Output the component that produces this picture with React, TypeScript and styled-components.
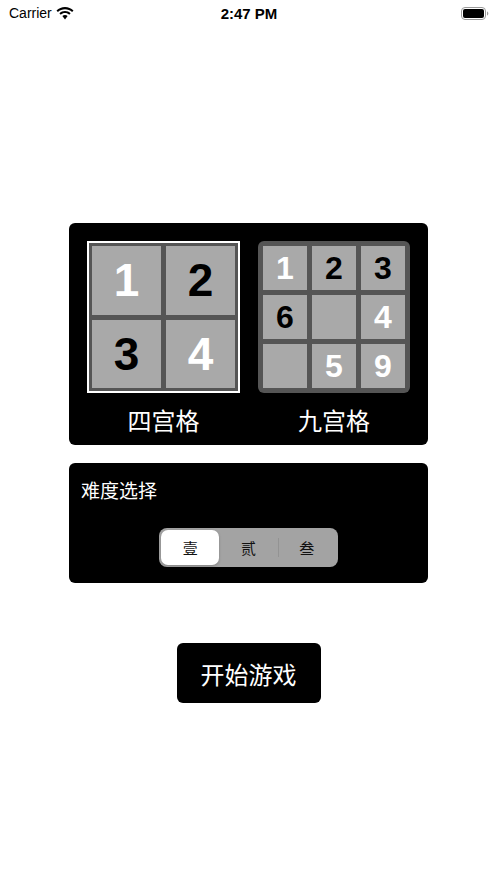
import React, { useState } from "react";
import styled, { createGlobalStyle } from "styled-components";

const Global = createGlobalStyle`
  html, body { margin: 0; padding: 0; background: #fff; }
  body { font-family: "Liberation Sans", "Noto Sans CJK SC", sans-serif; }
`;

const Page = styled.div`
  width: 497px;
  height: 883px;
  background: #fff;
  display: flex;
  flex-direction: column;
  align-items: center;
`;

const StatusBar = styled.div`
  width: 100%;
  height: 26px;
  box-sizing: border-box;
  padding: 0 8px 0 9px;
  display: grid;
  grid-template-columns: 1fr auto 1fr;
  align-items: center;
  font-family: "Liberation Sans", sans-serif;
  color: #000;
`;

const StatusLeft = styled.div`
  display: flex;
  align-items: center;
  gap: 4px;
  font-size: 14px;
`;

const StatusTime = styled.div`
  font-size: 15px;
  font-weight: bold;
`;

const StatusRight = styled.div`
  display: flex;
  justify-content: flex-end;
  align-items: center;
`;

const Card = styled.div<{ $mt: number }>`
  width: 359px;
  margin-top: ${(p) => p.$mt}px;
  background: #000;
  border-radius: 6px;
  box-sizing: border-box;
`;

const ModeCard = styled(Card)`
  padding: 18px 18px 9px 18px;
  display: grid;
  grid-template-columns: 153px 152px;
  column-gap: 18px;
`;

const ModeColumn = styled.div`
  display: flex;
  flex-direction: column;
  align-items: center;
`;

const FourGrid = styled.div`
  width: 153px;
  height: 152px;
  box-sizing: border-box;
  border: 2px solid #fff;
  background: #555;
  padding: 3px;
  display: grid;
  grid-template-columns: repeat(2, 69px);
  grid-template-rows: repeat(2, 68.5px);
  gap: 5px;
`;

const NineGrid = styled.div`
  width: 152px;
  height: 152px;
  box-sizing: border-box;
  background: #555;
  border-radius: 6px;
  padding: 5px;
  display: grid;
  grid-template-columns: repeat(3, 44px);
  grid-template-rows: repeat(3, 44px);
  gap: 5px;
`;

const Tile = styled.div<{ $light: boolean; $size: number }>`
  background: #a9a9a9;
  display: flex;
  align-items: center;
  justify-content: center;
  font-family: "Liberation Sans", sans-serif;
  font-weight: bold;
  font-size: ${(p) => p.$size}px;
  color: ${(p) => (p.$light ? "#fff" : "#000")};
  line-height: 1;
`;

const ModeLabel = styled.div`
  margin-top: 11px;
  color: #fff;
  font-family: "Noto Sans CJK SC", sans-serif;
  font-size: 24px;
  line-height: 32px;
`;

const DifficultyCard = styled(Card)`
  height: 120px;
  padding: 14px 12px 16px 12px;
  display: flex;
  flex-direction: column;
`;

const DiffTitle = styled.div`
  color: #fff;
  font-family: "Noto Sans CJK SC", sans-serif;
  font-size: 19px;
  line-height: 26px;
`;

const Segmented = styled.div`
  margin: auto auto 0 auto;
  width: 179px;
  height: 39px;
  box-sizing: border-box;
  padding: 2px;
  background: #a3a3a3;
  border-radius: 8px;
  display: grid;
  grid-template-columns: repeat(3, 1fr);
`;

const Segment = styled.button<{ $active: boolean; $divider: boolean }>`
  position: relative;
  border: none;
  margin: 0;
  padding: 0;
  cursor: pointer;
  border-radius: 7px;
  background: ${(p) => (p.$active ? "#fff" : "transparent")};
  box-shadow: ${(p) => (p.$active ? "0 1px 3px rgba(0,0,0,0.2)" : "none")};
  font-family: "Noto Sans CJK SC", sans-serif;
  font-size: 15px;
  color: #111;
  display: flex;
  align-items: center;
  justify-content: center;
  &::before {
    content: "";
    display: ${(p) => (p.$divider ? "block" : "none")};
    position: absolute;
    left: 0;
    top: 8px;
    bottom: 8px;
    width: 1px;
    background: #939393;
  }
`;

const StartButton = styled.button`
  margin-top: 60px;
  width: 144px;
  height: 60px;
  border: none;
  border-radius: 6px;
  background: #000;
  color: #fff;
  font-family: "Noto Sans CJK SC", sans-serif;
  font-size: 24px;
  cursor: pointer;
`;

const four = [
  { n: "1", light: true },
  { n: "2", light: false },
  { n: "3", light: false },
  { n: "4", light: true },
];

const nine = [
  { n: "1", light: true },
  { n: "2", light: false },
  { n: "3", light: false },
  { n: "6", light: false },
  { n: "", light: false },
  { n: "4", light: true },
  { n: "", light: false },
  { n: "5", light: true },
  { n: "9", light: true },
];

const Wifi = () => (
  <svg width="18" height="13" viewBox="0 0 18 13">
    <path d="M9 2.2c2.7 0 5.2 1 7.1 2.8l1.4-1.5C15.2 1.3 12.2 0 9 0S2.8 1.3.5 3.5L1.9 5C3.8 3.2 6.3 2.2 9 2.2z" fill="#000" />
    <path d="M9 6.1c1.6 0 3.1.6 4.2 1.7l1.4-1.5C13.1 4.9 11.1 4 9 4S4.9 4.9 3.4 6.3l1.4 1.5C5.9 6.7 7.4 6.1 9 6.1z" fill="#000" />
    <path d="M9 8c-1 0-1.9.4-2.6 1L9 12.6 11.6 9C10.9 8.4 10 8 9 8z" fill="#000" />
  </svg>
);

const Battery = () => (
  <svg width="28" height="13" viewBox="0 0 28 13">
    <rect x="0.5" y="0.5" width="24" height="12" rx="3.5" fill="none" stroke="#999" />
    <rect x="2" y="2" width="21" height="9" rx="2" fill="#000" />
    <path d="M26 4.5v4c.8-.3 1.3-1.1 1.3-2s-.5-1.7-1.3-2z" fill="#999" />
  </svg>
);

export default function App() {
  const [level, setLevel] = useState(0);
  const levels = ["壹", "贰", "叁"];
  return (
    <>
      <Global />
      <Page>
        <StatusBar>
          <StatusLeft>
            Carrier
            <Wifi />
          </StatusLeft>
          <StatusTime>2:47 PM</StatusTime>
          <StatusRight>
            <Battery />
          </StatusRight>
        </StatusBar>
        <ModeCard $mt={197}>
          <ModeColumn>
            <FourGrid>
              {four.map((t, i) => (
                <Tile key={i} $light={t.light} $size={46}>
                  {t.n}
                </Tile>
              ))}
            </FourGrid>
            <ModeLabel>四宫格</ModeLabel>
          </ModeColumn>
          <ModeColumn>
            <NineGrid>
              {nine.map((t, i) => (
                <Tile key={i} $light={t.light} $size={32}>
                  {t.n}
                </Tile>
              ))}
            </NineGrid>
            <ModeLabel>九宫格</ModeLabel>
          </ModeColumn>
        </ModeCard>
        <DifficultyCard $mt={18}>
          <DiffTitle>难度选择</DiffTitle>
          <Segmented>
            {levels.map((l, i) => (
              <Segment
                key={l}
                $active={level === i}
                $divider={i > 0 && level !== i && level !== i - 1}
                onClick={() => setLevel(i)}
              >
                {l}
              </Segment>
            ))}
          </Segmented>
        </DifficultyCard>
        <StartButton>开始游戏</StartButton>
      </Page>
    </>
  );
}
